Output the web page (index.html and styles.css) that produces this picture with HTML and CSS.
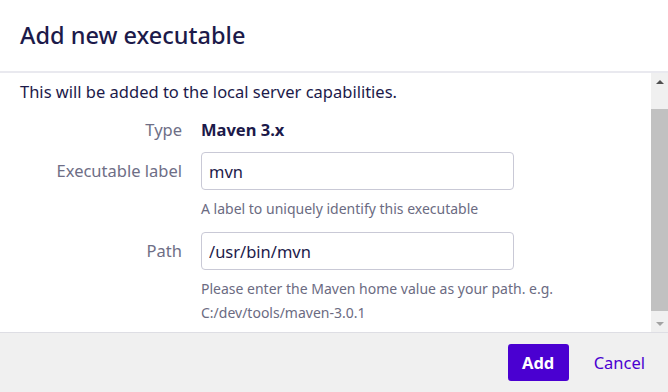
FILE: index.html
```html
<!DOCTYPE html>
<html lang="en">
<head>
	<meta charset="UTF-8">
	<title>Add new executable</title>
	<link rel="stylesheet" href="styles.css">
</head>
<body>
<div class="dialog">
    <div class="dialog-header">
        <h2>Add new executable</h2>
    </div>
    <div class="dialog-main">
        <div class="dialog-content">
            <p class="intro">This will be added to the local server capabilities.</p>
            <div class="field field-static">
                <label>Type</label>
                <strong class="value">Maven 3.x</strong>
            </div>
            <div class="field">
                <label for="exeLabel">Executable label</label>
                <div class="control">
                    <input id="exeLabel" type="text" value="mvn">
                    <p class="help">A label to uniquely identify this executable</p>
                </div>
            </div>
            <div class="field">
                <label for="exePath">Path</label>
                <div class="control">
                    <input id="exePath" type="text" value="/usr/bin/mvn">
                    <p class="help">Please enter the Maven home value as your path. e.g.<br>C:/dev/tools/maven-3.0.1</p>
                </div>
            </div>
        </div>
        <!--/dialog-content-->
        <div class="scrollbar">
            <div class="arrow arrow-up"></div>
            <div class="track"><div class="thumb"></div></div>
            <div class="arrow arrow-down"></div>
        </div>
    </div>
    <div class="dialog-footer">
        <button class="btn-primary">Add</button>
        <a href="#" class="btn-link">Cancel</a>
    </div>
</div>
</body>
</html>
```

FILE: styles.css
```css
body,h2,p {margin:0;padding:0;}
body {
	background:#fff;
	color:#1c1a4a;
	font:16.5px/1.4 "Noto Sans", "Open Sans", sans-serif;
}
.dialog {
	display:flex;
	flex-direction:column;
	width:668px;
	height:392px;
}
.dialog-header {
	display:flex;
	align-items:center;
	height:71px;
	padding:0 20px;
	border-bottom:2px solid #e9e9ef;
	flex-shrink:0;
}
.dialog-header h2 {
	font-size:23.5px;
	font-weight:500;
	color:#1c1a4a;
}
.dialog-main {
	display:flex;
	flex:1;
	min-height:0;
}
.dialog-content {
	flex:1;
	padding:8px 0 0 20px;
	overflow:hidden;
}
.intro {
	line-height:22px;
}
.field {
	display:grid;
	grid-template-columns:162px 1fr;
	column-gap:19px;
	margin-top:11px;
}
.field label {
	text-align:right;
	color:#6e6e86;
	line-height:38px;
}
.field-static {
	margin-top:16px;
}
.field-static label,
.field-static .value {
	line-height:22px;
}
.field .value {
	font-weight:700;
}
.control input {
	box-sizing:border-box;
	width:313px;
	height:38px;
	padding:0 7px;
	border:1px solid #c9c9d6;
	border-radius:4px;
	font:16.5px "Noto Sans", "Open Sans", sans-serif;
	color:#1c1a4a;
	background:#fff;
}
.help {
	margin-top:7px;
	font-size:14px;
	line-height:24px;
	color:#6b6b82;
}
.scrollbar {
	display:flex;
	flex-direction:column;
	width:17px;
	background:#f0f0f0;
	flex-shrink:0;
}
.arrow {
	height:17px;
	display:flex;
	align-items:center;
	justify-content:center;
}
.arrow:after {
	content:"";
	border-left:4px solid transparent;
	border-right:4px solid transparent;
}
.arrow-up:after {
	border-bottom:4px solid #505050;
}
.arrow-down:after {
	border-top:4px solid #a3a3a3;
}
.track {
	flex:1;
	padding:19px 0 4px;
}
.thumb {
	height:100%;
	background:#c1c1c1;
}
.dialog-footer {
	display:flex;
	align-items:center;
	justify-content:flex-end;
	gap:25px;
	height:59px;
	padding-right:23px;
	background:#f0f0f0;
	border-top:1px solid #dedee4;
	flex-shrink:0;
}
.btn-primary {
	width:61px;
	height:37px;
	border:0;
	border-radius:3px;
	background:#4a00d1;
	color:#fff;
	font:700 16.5px "Noto Sans", "Open Sans", sans-serif;
}
.btn-link {
	color:#4a00d1;
	text-decoration:none;
}
```
